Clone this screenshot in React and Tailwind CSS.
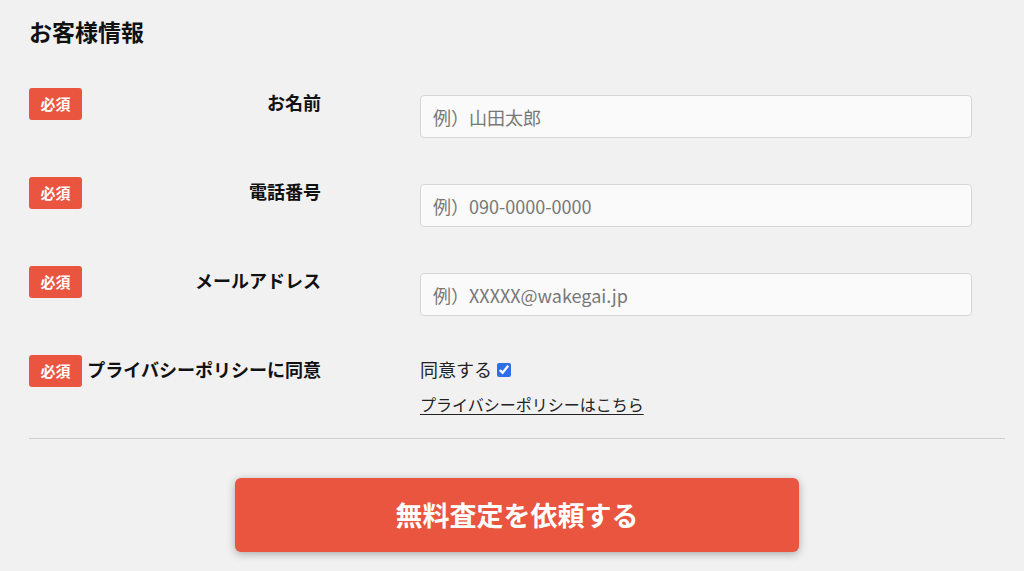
import React from 'react';

const fields = [
  { label: 'お名前', placeholder: '例）山田太郎', type: 'text' },
  { label: '電話番号', placeholder: '例）090-0000-0000', type: 'tel' },
  { label: 'メールアドレス', placeholder: '例）XXXXX@wakegai.jp', type: 'email' },
];

const Required = () => (
  <span className="flex h-[32px] w-[53px] shrink-0 items-center justify-center rounded-[3px] bg-[#e9553f] text-[15px] font-bold text-white">
    必須
  </span>
);

const FieldRow = ({ label, children }) => (
  <div className="flex items-start">
    <div className="flex w-[292px] shrink-0 items-center">
      <Required />
      <span className="flex-1 pb-[4px] text-right text-[18px] font-bold text-[#111]">{label}</span>
    </div>
    <div className="ml-[99px] w-[552px]">{children}</div>
  </div>
);

export default function App() {
  return (
    <div
      className="min-h-[571px] w-full bg-[#f1f1f1] px-[29px] text-[#111]"
      style={{ fontFamily: '"Noto Sans CJK JP", "Noto Sans", sans-serif' }}
    >
      <h2 className="pt-[15px] text-[23px] font-bold leading-[32px]">お客様情報</h2>

      <div className="mt-[41px] flex w-[976px] flex-col gap-[39px]">
        {fields.map(f => (
          <FieldRow key={f.label} label={f.label}>
            <input
              type={f.type}
              placeholder={f.placeholder}
              className="mt-[7px] h-[43px] w-full rounded-[4px] border border-[#d6d6d6] bg-[#fafafa] px-[12px] text-[18px] placeholder:text-[#777] focus:outline-none"
            />
          </FieldRow>
        ))}

        <FieldRow label="プライバシーポリシーに同意">
          <div className="flex flex-col items-start">
            <label className="flex h-[32px] items-center gap-[5px] pb-[3px] text-[18px] text-[#222]">
              同意する
              <input
                type="checkbox"
                defaultChecked
                className="h-[14px] w-[14px] accent-[#2f6fe8]"
              />
            </label>
            <a href="#" className="mt-[5px] text-[16px] leading-[24px] text-[#222] underline underline-offset-[3px]">
              プライバシーポリシーはこちら
            </a>
          </div>
        </FieldRow>
      </div>

      <hr className="mt-[22px] w-[976px] border-0 border-t border-[#cfcfcf]" />

      <div className="flex w-[976px] justify-center pt-[39px] pb-[19px]">
        <button className="flex h-[74px] w-[564px] items-center justify-center rounded-[6px] bg-[#e9553f] text-[27px] font-bold text-white shadow-[0_2px_8px_rgba(0,0,0,0.3)]">
          無料査定を依頼する
        </button>
      </div>
    </div>
  );
}
